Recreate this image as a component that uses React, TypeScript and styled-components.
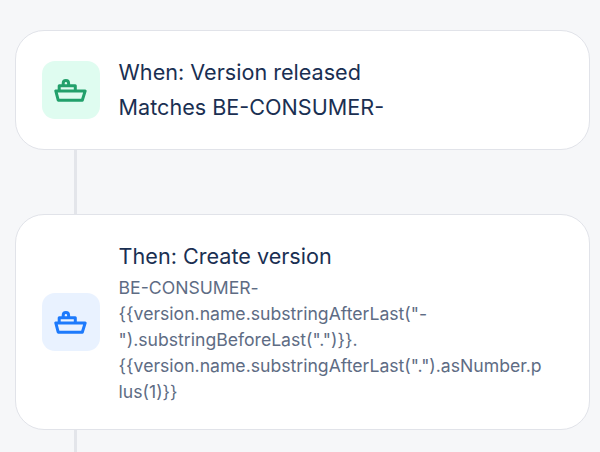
import React from "react";
import styled, { createGlobalStyle } from "styled-components";

const GlobalStyle = createGlobalStyle`
  html, body {
    margin: 0;
    padding: 0;
    height: 452px;
    overflow: hidden;
    background: #f6f7f9;
    font-family: Inter, "Liberation Sans", sans-serif;
  }
`;

const Flow = styled.div`
  display: flex;
  flex-direction: column;
  height: 452px;
  padding: 30px 10px 0 15px;
  box-sizing: border-box;
  overflow: hidden;
`;

const Card = styled.div`
  display: flex;
  align-items: center;
  flex-shrink: 0;
  gap: 18.6px;
  padding: 24px 44px 24px 26px;
  box-sizing: border-box;
  background: #ffffff;
  border: 1px solid #e1e3e9;
  border-radius: 29px;
`;

const Connector = styled.div`
  flex: 0 0 64px;
  width: 3px;
  margin-left: 59px;
  background: #e3e5ea;
`;

const IconTile = styled.div<{ $bg: string; $fg: string }>`
  display: flex;
  align-items: center;
  justify-content: center;
  flex-shrink: 0;
  width: 58px;
  height: 58px;
  border-radius: 13px;
  background: ${(p) => p.$bg};
  color: ${(p) => p.$fg};
`;

const Body = styled.div`
  display: flex;
  flex-direction: column;
  flex: 1;
  min-width: 0;
`;

const Title = styled.div`
  font-size: 21.6px;
  line-height: 35px;
  color: #1a2f52;
`;

const Detail = styled.div`
  margin-top: 1px;
  font-size: 17.62px;
  line-height: 26px;
  color: #5e6c84;
  overflow-wrap: break-word;
`;

function BoatIcon() {
  return (
    <svg width="34" height="34" viewBox="-1 -1 34 34" fill="none" stroke="currentColor" strokeWidth="3" strokeLinejoin="round">
      <path d="M0.8 16.9H30.2L27.3 26.2H3.2Z" />
      <path d="M4.2 16.5V11.8H20.3V16.5" />
      <path d="M8.2 11.5V9.3C8.2 7.3 9.6 6.5 10.9 6.5C12.2 6.5 13.6 7.3 13.6 9.3V11.5" />
    </svg>
  );
}

export default function App() {
  return (
    <>
      <GlobalStyle />
      <Flow>
        <Card>
          <IconTile $bg="#dffcf0" $fg="#22a06b">
            <BoatIcon />
          </IconTile>
          <Body>
            <Title>When: Version released</Title>
            <Title>Matches BE-CONSUMER-</Title>
          </Body>
        </Card>
        <Connector />
        <Card>
          <IconTile $bg="#e9f2ff" $fg="#1d7afc">
            <BoatIcon />
          </IconTile>
          <Body>
            <Title>Then: Create version</Title>
            <Detail>
              {'BE-CONSUMER-{{version.name.substringAfterLast("-").substringBeforeLast(".")}}.{{version.name.substringAfterLast(".").asNumber.plus(1)}}'}
            </Detail>
          </Body>
        </Card>
        <Connector />
      </Flow>
    </>
  );
}
